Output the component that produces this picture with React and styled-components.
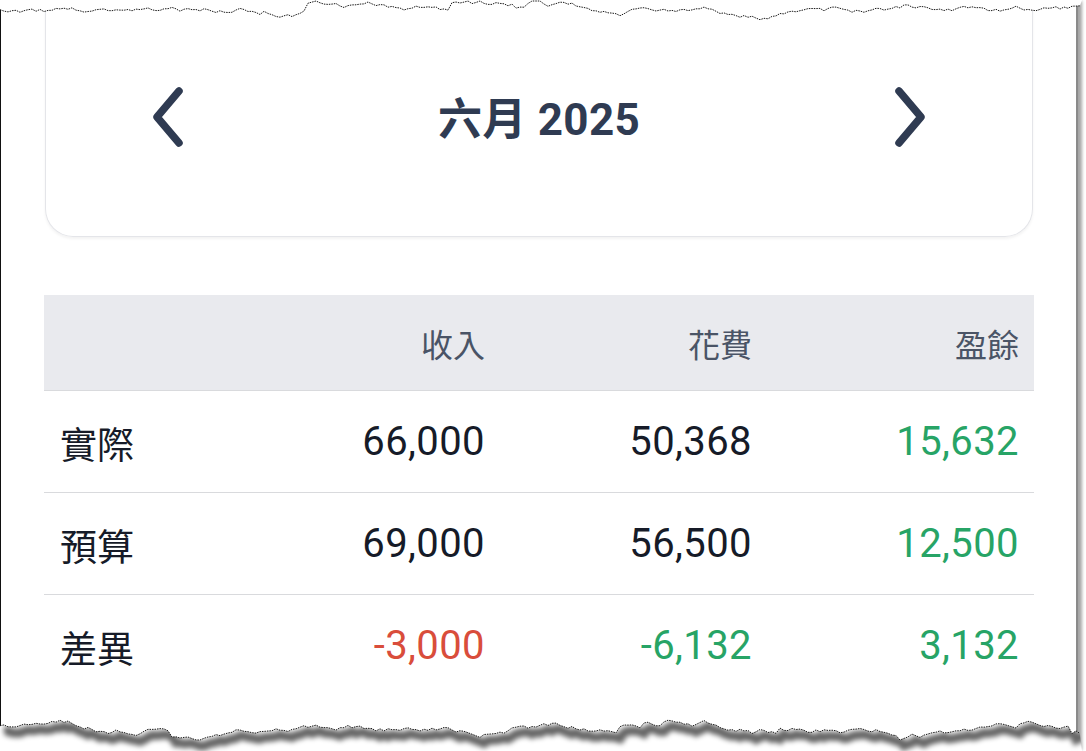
import React from "react";
import styled, { createGlobalStyle } from "styled-components";

const GlobalStyle = createGlobalStyle`
  html, body {
    margin: 0;
    padding: 0;
    background: #fff;
    overflow: hidden;
  }
  body {
    font-family: Roboto, "Noto Sans CJK TC", "Noto Sans", sans-serif;
  }
`;

const Frame = styled.div`
  position: relative;
  box-sizing: border-box;
  width: 1078px;
  height: 751px;
  padding: 0 43px 0 43px;
  border-left: 1px solid #111;
  border-right: 2px solid #8a8a8a;
  box-shadow: 5px 0 3px -1px rgba(0, 0, 0, 0.35);
  background: #fff;
`;

const Card = styled.div`
  box-sizing: border-box;
  margin-left: 1px;
  width: 988px;
  height: 237px;
  display: flex;
  align-items: center;
  justify-content: space-between;
  padding: 0 100px 2px 100px;
  border: 1px solid #e4e5e9;
  border-top: none;
  border-radius: 0 0 28px 28px;
  box-shadow: 0 2px 3px rgba(0, 0, 0, 0.05);
`;

const NavButton = styled.button`
  display: flex;
  align-items: center;
  justify-content: center;
  width: 44px;
  height: 72px;
  padding: 0;
  border: none;
  background: transparent;
  color: #2f3b52;
  cursor: pointer;
`;

const Title = styled.h2`
  margin: 0 0 2px;
  font-size: 44px;
  font-weight: 700;
  color: #2f3b52;
  letter-spacing: 0.3px;
`;

const Table = styled.div`
  margin-top: 58px;
  width: 990px;
`;

const Row = styled.div`
  display: grid;
  grid-template-columns: 193px 263px 267px 267px;
  height: ${(p) => (p.$head ? "95px" : "101px")};
  background: ${(p) => (p.$head ? "#e9eaee" : "transparent")};
  border-bottom: 1px solid ${(p) => (p.$last ? "transparent" : "#d9dadd")};
`;

const Cell = styled.div`
  display: flex;
  align-items: center;
  justify-content: ${(p) => (p.$label ? "flex-start" : "flex-end")};
  padding: ${(p) => (p.$label ? "2px 0 0 16px" : "0 15px 0 0")};
  font-size: ${(p) => (p.$head ? "32px" : p.$label ? "37px" : "40px")};
  letter-spacing: ${(p) => (p.$head || p.$label ? "0" : "0.4px")};
  color: ${(p) => p.$color || (p.$head ? "#4a5466" : "#161b28")};
  & + & {
    border-left: ${(p) => (p.$head ? "1px solid #e6e7eb" : "none")};
  }
`;

const Edge = styled.svg`
  position: absolute;
  left: -1px;
  pointer-events: none;
  top: ${(p) => (p.$bottom ? "700px" : "0")};
`;

function seeded(seed) {
  let s = seed;
  return () => {
    s = (s * 16807) % 2147483647;
    return (s - 1) / 2147483646;
  };
}

// jagged paper edge: a random walk with the odd sharp spike
function tornLine(seed, base, spread, width) {
  const rnd = seeded(seed);
  const pts = [];
  let y = base;
  for (let x = 0; x <= width; x += 4) {
    y += (rnd() - 0.5) * 5;
    if (rnd() > 0.9) y += (rnd() - 0.5) * 16;
    y += (base - y) * 0.06;
    y = Math.max(base - spread, Math.min(base + spread, y));
    pts.push([x, y]);
  }
  return pts;
}

function TornEdge({ bottom }) {
  const id = bottom ? "edgeBottom" : "edgeTop";
  const width = 1082;
  const h = bottom ? 51 : 30;
  const pts = bottom ? tornLine(11, 28, 12, width) : tornLine(5, 12, 11, width);
  const line = pts.map(([x, y]) => `${x},${y.toFixed(1)}`).join(" ");
  const body = pts.map(([x, y]) => `L${x},${y.toFixed(1)}`).join(" ");
  const below = `M0,${h} ${body} L${width},${h} Z`;
  const above = `M0,0 ${body} L${width},0 Z`;

  return (
    <Edge $bottom={bottom} width={width} height={h} viewBox={`0 0 ${width} ${h}`}>
      <defs>
        <filter id={`${id}-blur`} x="-5%" y="-200%" width="110%" height="500%">
          <feGaussianBlur stdDeviation="2.4" />
        </filter>
        <clipPath id={`${id}-clip`}>
          <path d={below} />
        </clipPath>
      </defs>
      {bottom ? (
        <>
          <path d={below} fill="#fff" />
          <g clipPath={`url(#${id}-clip)`}>
            <polyline
              points={line}
              transform="translate(4,6)"
              fill="none"
              stroke="rgba(0,0,0,0.6)"
              strokeWidth="9"
              filter={`url(#${id}-blur)`}
            />
          </g>
        </>
      ) : (
        <path d={above} fill="#fff" />
      )}
      <polyline points={line} fill="none" stroke="#1a1a1a" strokeWidth="1" strokeDasharray="1.5 1" />
    </Edge>
  );
}

function Chevron({ dir }) {
  const d = dir === "left" ? "M29 6 L7 32 L29 58" : "M7 6 L29 32 L7 58";
  return (
    <svg width="36" height="64" viewBox="0 0 36 64" fill="none">
      <path d={d} stroke="currentColor" strokeWidth="7.5" strokeLinecap="round" strokeLinejoin="round" />
    </svg>
  );
}

const GREEN = "#27a466";
const RED = "#d94d3b";

const rows = [
  { label: "實際", values: [["66,000"], ["50,368"], ["15,632", GREEN]] },
  { label: "預算", values: [["69,000"], ["56,500"], ["12,500", GREEN]] },
  { label: "差異", values: [["-3,000", RED], ["-6,132", GREEN], ["3,132", GREEN]] },
];

export default function App() {
  return (
    <>
      <GlobalStyle />
      <Frame>
        <Card>
          <NavButton aria-label="上個月">
            <Chevron dir="left" />
          </NavButton>
          <Title>六月 2025</Title>
          <NavButton aria-label="下個月">
            <Chevron dir="right" />
          </NavButton>
        </Card>

        <Table>
          <Row $head>
            <Cell $head $label />
            <Cell $head>收入</Cell>
            <Cell $head>花費</Cell>
            <Cell $head>盈餘</Cell>
          </Row>
          {rows.map((r, i) => (
            <Row key={r.label} $last={i === rows.length - 1}>
              <Cell $label>{r.label}</Cell>
              {r.values.map(([v, c], j) => (
                <Cell key={j} $color={c}>
                  {v}
                </Cell>
              ))}
            </Row>
          ))}
        </Table>

        <TornEdge />
        <TornEdge bottom />
      </Frame>
    </>
  );
}
